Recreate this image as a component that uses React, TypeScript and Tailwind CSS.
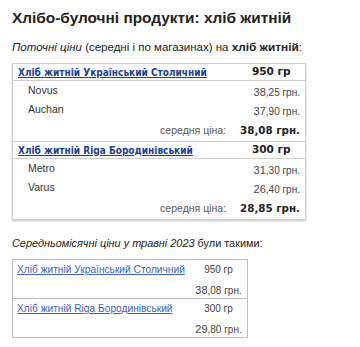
import React from "react";

const arial = { fontFamily: '"Liberation Sans", Arial, sans-serif' };
const verdana = { fontFamily: '"DejaVu Sans", Verdana, sans-serif' };
const verdanaC = { fontFamily: '"DejaVu Sans Condensed", "DejaVu Sans", Verdana, sans-serif' };

function Price({ a, b }: { a: string; b: string }) {
  return (
    <span className="text-[#444]" style={arial}>
      <span className="text-[11px]">{a}</span>
      <span className="text-[10px]">{b}</span>
    </span>
  );
}

type Group = {
  name: string;
  weight: string;
  stores: { n: string; a: string; b: string }[];
  avg: string;
};

const groups: Group[] = [
  {
    name: "Хліб житній Український Столичний",
    weight: "950 гр",
    stores: [
      { n: "Novus", a: "38", b: ",25 грн." },
      { n: "Auchan", a: "37", b: ",90 грн." },
    ],
    avg: "38,08 грн.",
  },
  {
    name: "Хліб житній Riga Бородинівський",
    weight: "300 гр",
    stores: [
      { n: "Metro", a: "31", b: ",30 грн." },
      { n: "Varus", a: "26", b: ",40 грн." },
    ],
    avg: "28,85 грн.",
  },
];

export default function App() {
  return (
    <div className="w-[360px] h-[347px] bg-white text-[#222] pt-[8px] pl-[12px]" style={arial}>
      <div className="h-[20px] leading-[20px] text-[15.4px] font-bold text-[#222]">
        Хлібо-булочні продукти: хліб житній
      </div>
      <div className="mt-[10px] h-[18px] leading-[18px] text-[11.5px] text-[#222]">
        <i>Поточні ціни</i> (середні і по магазинах) на <b className="text-[11.8px]">хліб житній</b>:
      </div>

      <div className="mt-[7px] w-[294px] border border-[#cfcfcf] shadow-[0_1px_2px_rgba(0,0,0,0.25)]">
        {groups.map((g, gi) => (
          <div key={g.name} className={gi === 0 ? "border-b border-[#cfcfcf]" : ""}>
            <div className="flex h-[17px] items-center border-b border-[#cfcfcf]">
              <a
                href="#"
                className="flex-1 pl-[5px] text-[10px] font-bold text-[#1c3f94] underline"
                style={verdanaC}
              >
                {g.name}
              </a>
              <span className="w-[53px] text-[10.5px] font-bold text-[#222]" style={verdana}>
                {g.weight}
              </span>
            </div>
            {g.stores.map((s, si) => (
              <div
                key={s.n}
                className={`flex items-center justify-between pl-[15px] pr-[5px] ${si === 0 ? "h-[19px]" : "h-[20px]"}`}
              >
                <span className="text-[10.5px] text-[#333]">{s.n}</span>
                <Price a={s.a} b={s.b} />
              </div>
            ))}
            <div className="flex h-[21px] items-center justify-end pr-[5px]">
              <span className="text-[10.5px] text-[#555]">середня ціна:</span>
              <span className="ml-[14px] text-[10.3px] font-bold text-[#222]" style={verdana}>
                {g.avg}
              </span>
            </div>
          </div>
        ))}
      </div>

      <div className="mt-[14px] h-[18px] leading-[18px] text-[10.9px] text-[#222]">
        <i>Середньомісячні ціни у травні 2023</i> були такими:
      </div>

      <div className="mt-[7px] w-[236px] border border-[#bdbdbd]">
        {[
          { name: "Хліб житній Український Столичний", w: "950 гр", a: "38", b: ",08 грн." },
          { name: "Хліб житній Riga Бородинівський", w: "300 гр", a: "29", b: ",80 грн." },
        ].map((r, i) => (
          <div key={r.name} className={`flex ${i === 0 ? "border-b border-[#bdbdbd]" : ""}`}>
            <div className="flex-1 pl-[4px]">
              <div className="flex h-[19px] items-center">
                <a href="#" className="text-[10.2px] text-[#3b62b8] underline">
                  {r.name}
                </a>
              </div>
            </div>
            <div className="w-[52px] pr-[5px]">
              <div className="flex h-[19px] items-center justify-center text-[10px] text-[#444]">{r.w}</div>
              <div className="flex h-[19px] items-center justify-center">
                <Price a={r.a} b={r.b} />
              </div>
            </div>
          </div>
        ))}
      </div>
    </div>
  );
}
